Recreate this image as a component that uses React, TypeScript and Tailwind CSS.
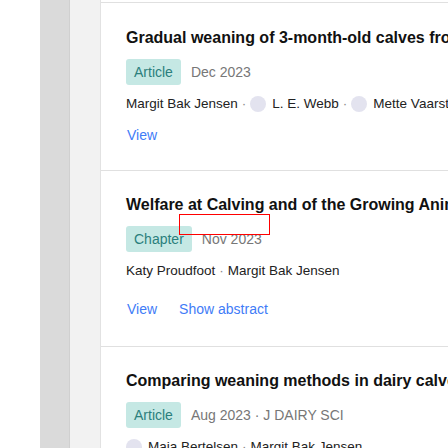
import React from 'react'

type Author = { name: string; avatar?: boolean }

type Pub = {
  title: string
  type: string
  meta: string
  authors: Author[]
  abstract?: boolean
}

const pubs: Pub[] = [
  {
    title: 'Gradual weaning of 3-month-old calves from their dams: effects on behaviour',
    type: 'Article',
    meta: 'Dec 2023',
    authors: [{ name: 'Margit Bak Jensen' }, { name: 'L. E. Webb', avatar: true }, { name: 'Mette Vaarst', avatar: true }],
  },
  {
    title: 'Welfare at Calving and of the Growing Animal',
    type: 'Chapter',
    meta: 'Nov 2023',
    authors: [{ name: 'Katy Proudfoot' }, { name: 'Margit Bak Jensen' }],
    abstract: true,
  },
  {
    title: 'Comparing weaning methods in dairy calves with different dam contact levels',
    type: 'Article',
    meta: 'Aug 2023 · J DAIRY SCI',
    authors: [{ name: 'Maja Bertelsen', avatar: true }, { name: 'Margit Bak Jensen' }],
  },
]

export default function App() {
  return (
    <div className="relative flex h-[448px] w-[448px] overflow-hidden bg-white font-['Liberation_Sans',Arial,sans-serif]">
      {/* side rails */}
      <div className="w-10 shrink-0 bg-white" />
      <div className="w-[29px] shrink-0 bg-[#dadada]" />
      <div className="w-px shrink-0 bg-[#d0d0d0]" />
      <div className="w-[31px] shrink-0 border-r border-[#e2e2e2] bg-[#f2f2f2]" />

      {/* list */}
      <div className="min-w-0 flex-1 overflow-hidden pt-[2px]">
        {pubs.map((p, i) => (
          <PubItem key={i} pub={p} first={i === 0} />
        ))}
      </div>

      {/* highlight box */}
      <div className="absolute left-[179px] top-[214px] h-[21px] w-[91px] border border-[#ff0000]" />
    </div>
  )
}

function PubItem({ pub, first }: { pub: Pub; first: boolean }) {
  return (
    <div className={`border-t border-[#e0e0e0] pl-[25px] ${first ? 'pt-6 pb-[25px]' : 'pt-[23px] pb-[27px]'}`}>
      <h3 className="whitespace-nowrap text-base font-bold leading-[22px] text-[#111]">{pub.title}</h3>

      <div className="mt-[10px] flex items-center gap-[10px] whitespace-nowrap">
        <span className="flex h-[26px] items-center rounded-[3px] bg-[#c5e8e4] px-2 text-sm text-[#2b7f7c]">{pub.type}</span>
        <span className="text-sm text-[#777]">{pub.meta}</span>
      </div>

      <div className="mt-[9px] flex items-center whitespace-nowrap text-[13.5px] leading-5 text-[#222]">
        {pub.authors.map((a, i) => (
          <span key={i} className="flex items-center">
            {i > 0 && <span className="px-[4px] text-[#888]">·</span>}
            {a.avatar && <span className="mr-[6px] h-4 w-4 rounded-full bg-[#e3e3ef]" />}
            {a.name}
          </span>
        ))}
      </div>

      <div className={`flex gap-[22px] text-sm leading-5 text-[#3f7cf7] ${pub.abstract ? 'mt-[18px]' : 'mt-[11px]'}`}>
        <a className="pl-px">View</a>
        {pub.abstract && <a>Show abstract</a>}
      </div>
    </div>
  )
}
